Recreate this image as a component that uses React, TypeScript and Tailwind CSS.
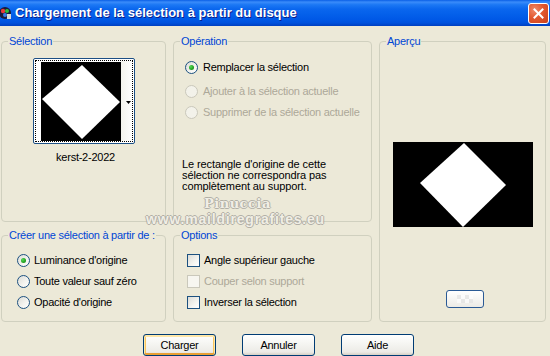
import React from "react";

function Radio({ checked = false, disabled = false }: { checked?: boolean; disabled?: boolean }) {
  return (
    <span
      className={
        "flex w-[13px] h-[13px] shrink-0 items-center justify-center rounded-full border " +
        (disabled
          ? "border-[#CAC8BB] bg-[#F3F2EA]"
          : "border-[#1C5180] bg-[linear-gradient(135deg,#DCDCD7_0%,#F4F4F0_60%,#FFFFFF_100%)]")
      }
    >
      {checked && (
        <span className="block w-[5px] h-[5px] rounded-full bg-[radial-gradient(circle_at_35%_35%,#55D855_0%,#21A121_60%,#1A7F1A_100%)]" />
      )}
    </span>
  );
}

function Check({ disabled = false }: { disabled?: boolean }) {
  return (
    <span
      className={
        "block w-[13px] h-[13px] shrink-0 border " +
        (disabled
          ? "border-[#CAC8BB] bg-[#F7F6F0]"
          : "border-[#1C5180] bg-[linear-gradient(135deg,#DCDCD7_0%,#F4F4F0_60%,#FFFFFF_100%)]")
      }
    />
  );
}

function Group({
  label,
  className = "",
  children,
}: {
  label: string;
  className?: string;
  children?: React.ReactNode;
}) {
  return (
    <fieldset className={"border border-[#D0D0BF] rounded-[4px] min-w-0 " + className}>
      <legend className="ml-[6px] px-[1px] text-[11px] leading-[13px] text-[#0046D5]">{label}</legend>
      {children}
    </fieldset>
  );
}

function Button({ label, primary = false }: { label: string; primary?: boolean }) {
  return (
    <div
      className={
        "flex w-[73px] h-[22px] items-center justify-center rounded-[3px] border border-[#003C74] text-[11px] text-black bg-[linear-gradient(to_bottom,#FFFFFF_0%,#F6F6F3_40%,#ECEBE6_85%,#D6D0C5_100%)] " +
        (primary
          ? "shadow-[inset_0_1px_0_1px_#FFE7A8,inset_0_-1px_0_1px_#E89F34,inset_1px_0_0_1px_#F8C660,inset_-1px_0_0_1px_#F8C660]"
          : "")
      }
    >
      {label}
    </div>
  );
}

export default function App() {
  return (
    <div
      className="relative w-[550px] h-[356px] overflow-hidden bg-[#ECE9D8] text-black tracking-[-0.25px]"
      style={{ fontFamily: '"Liberation Sans", Arial, sans-serif' }}
    >
      {/* Title bar */}
      <div className="flex h-[26px] items-center bg-[linear-gradient(to_bottom,#0A5FE6_0%,#3A8CFA_8%,#1C78F4_18%,#0A66EE_35%,#0460EA_55%,#0058E6_75%,#0052DD_88%,#003FC0_100%)]">
        <svg width="14" height="14" viewBox="0 0 14 14" className="ml-[-2px] shrink-0">
          <circle cx="7" cy="7" r="6" fill="#1a1a3a" />
          <circle cx="5" cy="5" r="2.2" fill="#e83a3a" />
          <circle cx="9" cy="5" r="2" fill="#2fbf3a" />
          <circle cx="7" cy="9" r="2" fill="#3a7ae8" />
          <rect x="9" y="8" width="4" height="5" fill="#d8d8d8" />
        </svg>
        <span className="ml-[3px] text-[13px] font-bold text-white tracking-normal [text-shadow:1px_1px_0_#0A1E8A]">
          Chargement de la sélection à partir du disque
        </span>
        <div className="ml-auto mr-[1px] flex h-[21px] w-[21px] items-center justify-center rounded-[3px] border border-white bg-[radial-gradient(circle_at_30%_30%,#F08A6A_0%,#E2582F_45%,#C8401C_100%)]">
          <svg width="11" height="11" viewBox="0 0 11 11">
            <path d="M1.5 1.5 L9.5 9.5 M9.5 1.5 L1.5 9.5" stroke="white" strokeWidth="2" strokeLinecap="square" />
          </svg>
        </div>
      </div>

      {/* Body */}
      <div className="pt-[9px] pl-[1px]">
        <div className="grid grid-cols-[165px_199px_167px] grid-rows-[187px_93px] gap-x-[7px] gap-y-[7px]">
          {/* Sélection */}
          <Group label="Sélection">
            <div className="mx-auto mt-[10px] w-[102px] h-[86px] rounded-[2px] border border-[#1C4F85] bg-white p-[1px]">
              <div className="flex h-full w-full border border-dotted border-black">
                <div className="pl-[5px] pt-[1px]">
                  <svg width="80" height="79" viewBox="0 0 80 79" className="block">
                    <rect width="80" height="79" fill="black" />
                    <polygon points="41,3 79,40 41,77 1,37" fill="white" />
                  </svg>
                </div>
                <div className="flex flex-1 items-center justify-center bg-[linear-gradient(to_right,#F4F4EE,#FFFFFF)]">
                  <svg width="5" height="3" viewBox="0 0 5 3" className="ml-[4px] mt-[2px]">
                    <polygon points="0,0 5,0 2.5,3" fill="black" />
                  </svg>
                </div>
              </div>
            </div>
            <div className="mt-[7px] text-center text-[11px] leading-[13px] pl-[4px]">kerst-2-2022</div>
          </Group>

          {/* Opération */}
          <Group label="Opération">
            <div className="pl-[11px] text-[11px] leading-[13px]">
              <div className="mt-[13px] flex items-center gap-[5px]">
                <Radio checked />
                <span>Remplacer la sélection</span>
              </div>
              <div className="mt-[11px] flex items-center gap-[5px] text-[#ACA899]">
                <Radio disabled />
                <span>Ajouter à la sélection actuelle</span>
              </div>
              <div className="mt-[8px] flex items-center gap-[5px] text-[#ACA899]">
                <Radio disabled />
                <span>Supprimer de la sélection actuelle</span>
              </div>
              <p className="mt-[40px] ml-[-3px] w-[170px] text-[11px] leading-[11px] tracking-[-0.1px]">
                Le rectangle d'origine de cette sélection ne correspondra pas complètement au support.
              </p>
            </div>
          </Group>

          {/* Aperçu */}
          <Group label="Aperçu" className="row-span-2">
            <div className="mx-auto mt-[94px] w-[140px] h-[85px]">
              <svg width="140" height="85" viewBox="0 0 140 85" className="block">
                <rect width="140" height="85" fill="black" />
                <polygon points="71,1 113,43 70,85 27,41" fill="white" />
              </svg>
            </div>
            <div className="ml-[66px] mt-[63px] flex h-[18px] w-[38px] items-center justify-center rounded-[3px] border border-[#2A5A95] bg-[linear-gradient(to_bottom,#FFFFFF,#ECEBE6)]">
              <div className="grid grid-cols-4 grid-rows-2 w-[16px] h-[8px] opacity-60">
                <span className="bg-[#E0E0E0]" />
                <span className="bg-white" />
                <span className="bg-[#E0E0E0]" />
                <span className="bg-white" />
                <span className="bg-white" />
                <span className="bg-[#E0E0E0]" />
                <span className="bg-white" />
                <span className="bg-[#E0E0E0]" />
              </div>
            </div>
          </Group>

          {/* Créer */}
          <Group label="Créer une sélection à partir de :">
            <div className="pl-[15px] text-[11px] leading-[13px] flex flex-col gap-[8px] mt-[12px]">
              <div className="flex items-center gap-[4px]">
                <Radio checked />
                <span>Luminance d'origine</span>
              </div>
              <div className="flex items-center gap-[4px]">
                <Radio />
                <span>Toute valeur sauf zéro</span>
              </div>
              <div className="flex items-center gap-[4px]">
                <Radio />
                <span>Opacité d'origine</span>
              </div>
            </div>
          </Group>

          {/* Options */}
          <Group label="Options">
            <div className="pl-[13px] text-[11px] leading-[13px] flex flex-col gap-[8px] mt-[12px]">
              <div className="flex items-center gap-[4px]">
                <Check />
                <span>Angle supérieur gauche</span>
              </div>
              <div className="flex items-center gap-[4px] text-[#ACA899]">
                <Check disabled />
                <span>Couper selon support</span>
              </div>
              <div className="flex items-center gap-[4px]">
                <Check />
                <span>Inverser la sélection</span>
              </div>
            </div>
          </Group>
        </div>

        {/* Buttons */}
        <div className="mt-[12px] flex gap-[26px] pl-[142px]">
          <Button label="Charger" primary />
          <Button label="Annuler" />
          <Button label="Aide" />
        </div>
      </div>

      {/* Watermark overlay */}
      <div
        className="pointer-events-none absolute left-[204px] top-[196px] text-[13px] leading-[15px] font-bold text-[#F2F0E8] opacity-85 tracking-[0.5px] [text-shadow:1px_0_0_#A8A69E,-1px_0_0_#A8A69E,0_1px_0_#A8A69E,0_-1px_0_#A8A69E]"
        style={{ fontFamily: '"DejaVu Serif", serif' }}
      >
        Pinuccia
      </div>
      <div
        className="pointer-events-none absolute left-[146px] top-[212px] text-[14px] leading-[15px] font-bold text-[#F2F0E8] opacity-85 tracking-[0.8px] [text-shadow:1px_0_0_#A8A69E,-1px_0_0_#A8A69E,0_1px_0_#A8A69E,0_-1px_0_#A8A69E]"
        style={{ fontFamily: '"Liberation Sans", sans-serif' }}
      >
        www.maildiregrafites.eu
      </div>
    </div>
  );
}
